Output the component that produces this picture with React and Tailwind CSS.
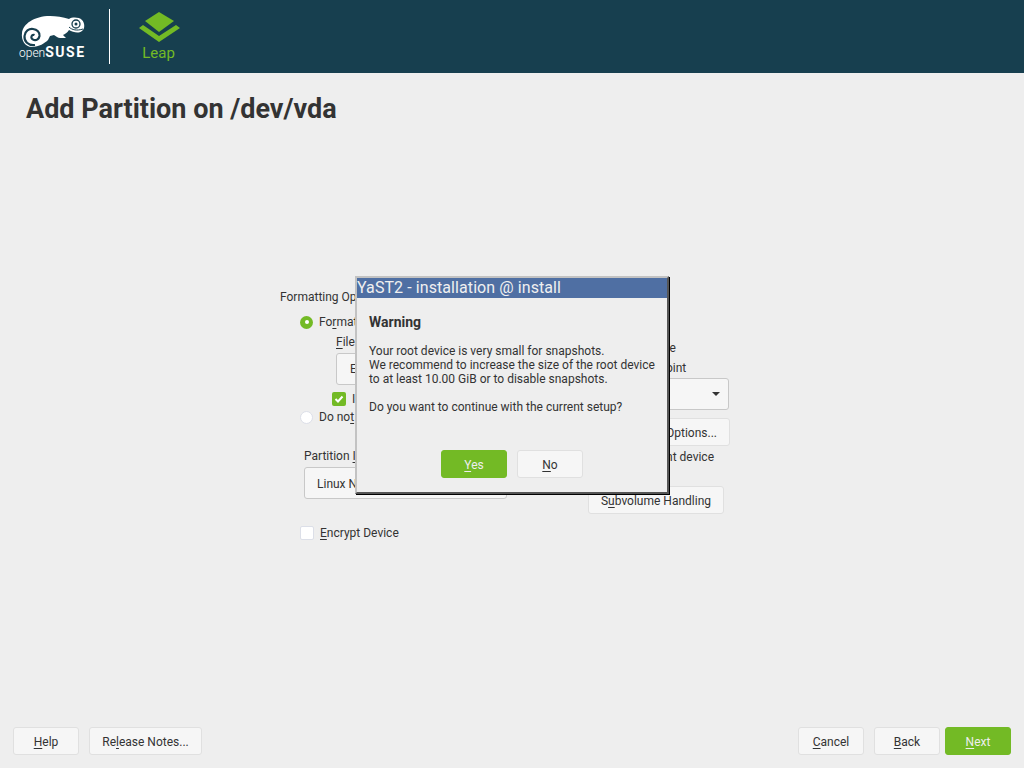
import React from 'react';

const font = { fontFamily: 'Roboto, sans-serif' };

// letter with the keyboard shortcut underline
function U({ children }) {
  return <span className="underline underline-offset-2">{children}</span>;
}

function Btn({ children, green, className = '' }) {
  return (
    <button
      className={`h-7 pt-px rounded-[3px] border text-xs flex items-center justify-center ${
        green ? 'bg-[#73ba25] border-[#73ba25] text-[#eeeeee]' : 'bg-[#f6f6f6] border-[#e0e0e0] text-[#333333]'
      } ${className}`}
    >
      {children}
    </button>
  );
}

function Logo() {
  return (
    <svg width="68" height="34" viewBox="0 0 68 34" className="block">
      <path
        fill="#fff"
        d="M3 19C4 10 15 2 31 2C37 2 44 3 50 5C53 3 60 3 63 6C66 9 66 15 63 17C59 20 54 18 50 16C48 19 46 20 44 21L47 24L41 24C39 24 37 22 35 21L31 22L29 26C26 29 20 33 13 33C6 33 2 26 3 19Z"
      />
      <path fill="none" stroke="#173f4f" strokeWidth="2.2" d="M16 31C9 32 5 27 5.500 22C6 17 10 14.500 14 15C18 15.500 21 18 20.500 22C20 25 17.500 26.500 15 26C13 25.500 12 24 12.500 22.500C13 21 14.500 20.500 15.500 21" />
      <circle cx="57" cy="10" r="4" fill="none" stroke="#173f4f" strokeWidth="1.3" />
      <circle cx="57" cy="10" r="1.5" fill="#173f4f" />
      <path fill="none" stroke="#173f4f" strokeWidth="1" d="M50 13C53 16 58 17 64 15" />
    </svg>
  );
}

function Leap() {
  return (
    <svg width="41" height="30" viewBox="0 0 41 30" className="block">
      <path fill="#73ba25" d="M20 0L35 9L20 20L6 9Z" />
      <path fill="#73ba25" d="M0 16L4 13L20 24L37 13L41 16L20 30Z" />
    </svg>
  );
}

export default function App() {
  return (
    <div className="relative w-[1024px] h-[768px] overflow-hidden flex flex-col bg-[#eeeeee] text-[#333333] text-xs" style={font}>
      <header className="h-[73px] shrink-0 bg-[#173f4f] flex items-center">
        <div className="ml-[19px] w-[68px] self-start mt-[14px] flex flex-col">
          <Logo />
          <div className="-mt-[3px] text-white text-[12px] font-light leading-[14px] whitespace-nowrap">
            open<span className="text-[14px] font-bold tracking-[1.5px]">SUSE</span>
          </div>
        </div>
        <div className="ml-[22px] w-px h-[55px] bg-white" />
        <div className="ml-[29px] flex flex-col items-center w-[41px]">
          <Leap />
          <div className="mt-[3px] pr-[2px] text-[#73ba25] text-[15px] leading-4">Leap</div>
        </div>
      </header>

      <h1 className="ml-[26px] mt-[21px] text-[27px] leading-[30px] font-bold text-[#333333]">Add Partition on /dev/vda</h1>

      <main className="flex-1 relative">
        <div className="ml-[280px] mt-[166px] flex">
          {/* left column, mostly hidden by the popup */}
          <div className="w-[308px] shrink-0">
            <div className="leading-[14px]">Formatting Options</div>
            <div className="mt-[11px] ml-[20px] flex items-center gap-[6px] leading-[14px]">
              <span className="w-[13px] h-[13px] rounded-full bg-[#73ba25] flex items-center justify-center">
                <span className="w-[4px] h-[4px] rounded-full bg-white" />
              </span>
              <span>Fo<U>r</U>mat device</span>
            </div>
            <div className="mt-[6px] ml-[56px] leading-[14px]"><U>F</U>ile System</div>
            <div className="mt-[4px] ml-[56px] w-[160px] h-[32px] rounded-[3px] border border-[#c8c8c8] bg-[#f6f6f6] pl-[13px] flex items-center">Ext4</div>
            <div className="mt-[7px] ml-[52px] flex items-center gap-[6px] leading-[14px]">
              <span className="w-[14px] h-[14px] rounded-[2px] bg-[#73ba25] flex items-center justify-center">
                <svg width="10" height="10" viewBox="0 0 10 10"><path d="M1.500 5L4 7.500L8.500 2.500" fill="none" stroke="#fff" strokeWidth="2" /></svg>
              </span>
              <span>I</span>
            </div>
            <div className="mt-[4px] ml-[20px] flex items-center gap-[6px] leading-[14px]">
              <span className="w-[13px] h-[13px] rounded-full bg-white border border-[#dcdfe8]" />
              <span>Do no<U>t</U> format device</span>
            </div>
            <div className="mt-[25px] ml-[24px] leading-[14px]">Partition <U>I</U>D</div>
            <div className="mt-[4px] ml-[24px] w-[203px] h-[32px] rounded-[3px] border border-[#c8c8c8] bg-[#f6f6f6] pl-[12px] pt-px flex items-center">Linux Native</div>
            <div className="mt-[27px] ml-[20px] flex items-center gap-[6px] leading-[14px]">
              <span className="w-[14px] h-[14px] rounded-[2px] bg-white border border-[#dcdfe8]" />
              <span><U>E</U>ncrypt Device</span>
            </div>
          </div>

          {/* right column */}
          <div className="w-[142px] shrink-0 mt-[51px]">
            <div className="pl-[16px] leading-[14px] whitespace-nowrap">Mount device</div>
            <div className="mt-[5px] pl-[33px] leading-[16px] whitespace-nowrap">Mount Point</div>
            <div className="mt-[2px] ml-[36px] w-[105px] h-[32px] rounded-[3px] border border-[#c8c8c8] bg-[#f6f6f6] flex items-center justify-end pr-[8px]">
              <span className="w-0 h-0 border-x-[4px] border-x-transparent border-t-[4px] border-t-[#333333]" />
            </div>
            <Btn className="mt-[8px] w-[142px] justify-end pr-[12px]">Fstab Options...</Btn>
            <div className="mt-[4px] pl-[16px] leading-[14px] whitespace-nowrap">Do not mount device</div>
            <Btn className="mt-[22px] w-[136px]"><span>S<U>u</U>bvolume Handling</span></Btn>
          </div>
        </div>
      </main>

      <footer className="h-[41px] shrink-0 flex items-start px-[13px]">
        <Btn className="w-[66px]"><span><U>H</U>elp</span></Btn>
        <Btn className="w-[113px] ml-[10px]"><span>Re<U>l</U>ease Notes...</span></Btn>
        <Btn className="w-[66px] ml-auto"><span><U>C</U>ancel</span></Btn>
        <Btn className="w-[66px] ml-[10px]"><span><U>B</U>ack</span></Btn>
        <Btn green className="w-[66px] ml-[5px]"><span><U>N</U>ext</span></Btn>
      </footer>

      {/* warning popup */}
      <div className="absolute left-[355px] top-[276px] w-[314px] h-[218px] bg-[#eeeeee] border-2 border-[#c2c2c2] border-r-[#555555] border-b-[#555555] shadow-[1px_1px_0_#000] flex flex-col">
        <div className="h-[20px] shrink-0 bg-[#4f6fa3] text-[#f0f0f0] text-[16px] tracking-[0.08px] leading-[20px]">YaST2 - installation @ install</div>
        <div className="pl-[12px] mt-[16px] text-sm font-bold leading-[16px]">Warning</div>
        <div className="pl-[12px] mt-[14px] leading-[14px] whitespace-pre-line">
          {'Your root device is very small for snapshots.\nWe recommend to increase the size of the root device\nto at least 10.00 GiB or to disable snapshots.\n\nDo you want to continue with the current setup?'}
        </div>
        <div className="mt-[36px] flex justify-center gap-[10px]">
          <Btn green className="w-[66px]"><span><U>Y</U>es</span></Btn>
          <Btn className="w-[66px]"><span><U>N</U>o</span></Btn>
        </div>
      </div>
    </div>
  );
}
